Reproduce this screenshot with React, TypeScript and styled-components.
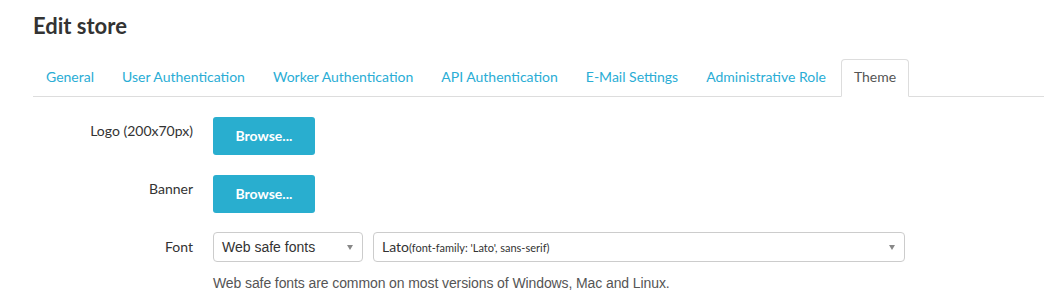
import React from "react";
import styled, { createGlobalStyle } from "styled-components";

const GlobalStyle = createGlobalStyle`
  html, body { margin: 0; padding: 0; background: #fff; }
  body {
    font-family: Lato, "Open Sans", Arial, sans-serif;
    font-size: 14px;
    line-height: 20px;
    color: #333;
  }
  * { box-sizing: border-box; }
`;

const Page = styled.div`
  padding: 13px 0 0 33px;
`;

const Title = styled.h1`
  margin: 0;
  font-size: 22px;
  line-height: 26.4px;
  font-weight: 700;
  color: #333;
`;

const TabList = styled.ul`
  list-style: none;
  margin: 20px 0 0 0;
  padding: 0;
  display: flex;
  border-bottom: 1px solid #ddd;
`;

const Tab = styled.li<{ $active?: boolean }>`
  margin: 0 2px -1px 0;
  padding: 7px 12px 9px;
  border: 1px solid ${(p) => (p.$active ? "#ddd" : "transparent")};
  border-bottom-color: transparent;
  border-radius: 4px 4px 0 0;
  background: ${(p) => (p.$active ? "#fff" : "transparent")};
  color: ${(p) => (p.$active ? "#555" : "#2aadd5")};
  font-size: 14px;
  line-height: 20px;
  white-space: nowrap;
  cursor: pointer;
`;

const Form = styled.div`
  display: grid;
  grid-template-columns: 160px 1fr;
  column-gap: 20px;
  row-gap: 20px;
  margin-top: 20px;
  align-items: start;
`;

const Label = styled.label`
  text-align: right;
  padding-top: 4px;
  font-size: 14px;
  line-height: 20px;
  color: #333;
`;

const Field = styled.div`
  display: flex;
  flex-direction: column;
  align-items: flex-start;
`;

const Button = styled.button`
  height: 38px;
  padding: 0 22.5px;
  border: 0;
  border-radius: 3px;
  background: #29aecf;
  color: #fff;
  font-family: Lato, sans-serif;
  font-weight: 700;
  font-size: 14px;
  line-height: 20px;
  cursor: pointer;
`;

const SelectRow = styled.div`
  display: flex;
  gap: 10px;
  margin-top: -1px;
`;

const Select = styled.div<{ $width: number }>`
  width: ${(p) => p.$width}px;
  height: 30px;
  border: 1px solid #ccc;
  border-radius: 4px;
  background: #fff;
  display: flex;
  align-items: center;
  padding: 0 8px;
`;

const SelectText = styled.span`
  flex: 1;
  font-family: "Liberation Sans", Arial, sans-serif;
  font-size: 14px;
  color: #333;
  white-space: nowrap;
`;

const LatoName = styled.span`
  font-family: Lato, sans-serif;
  font-size: 14px;
`;

const Hint = styled.span`
  font-family: Lato, sans-serif;
  font-size: 11px;
`;

const Arrow = styled.span`
  width: 0;
  height: 0;
  border-left: 3.5px solid transparent;
  border-right: 3.5px solid transparent;
  border-top: 5px solid #888;
  margin-right: 1px;
`;

const Help = styled.p`
  margin: 11px 0 0;
  font-family: "Liberation Sans", Arial, sans-serif;
  font-size: 14px;
  line-height: 20px;
  letter-spacing: -0.1px;
  color: #555;
`;

const tabs = [
  "General",
  "User Authentication",
  "Worker Authentication",
  "API Authentication",
  "E-Mail Settings",
  "Administrative Role",
  "Theme",
];

export default function App() {
  return (
    <>
      <GlobalStyle />
      <Page>
        <Title>Edit store</Title>
        <TabList>
          {tabs.map((t) => (
            <Tab key={t} $active={t === "Theme"}>
              {t}
            </Tab>
          ))}
        </TabList>
        <Form>
          <Label>Logo (200x70px)</Label>
          <Field>
            <Button>Browse...</Button>
          </Field>
          <Label>Banner</Label>
          <Field>
            <Button>Browse...</Button>
          </Field>
          <Label>Font</Label>
          <Field>
            <SelectRow>
              <Select $width={150}>
                <SelectText>Web safe fonts</SelectText>
                <Arrow />
              </Select>
              <Select $width={532}>
                <SelectText>
                  <LatoName>Lato</LatoName>
                  <Hint>(font-family: 'Lato', sans-serif)</Hint>
                </SelectText>
                <Arrow />
              </Select>
            </SelectRow>
            <Help>Web safe fonts are common on most versions of Windows, Mac and Linux.</Help>
          </Field>
        </Form>
      </Page>
    </>
  );
}
